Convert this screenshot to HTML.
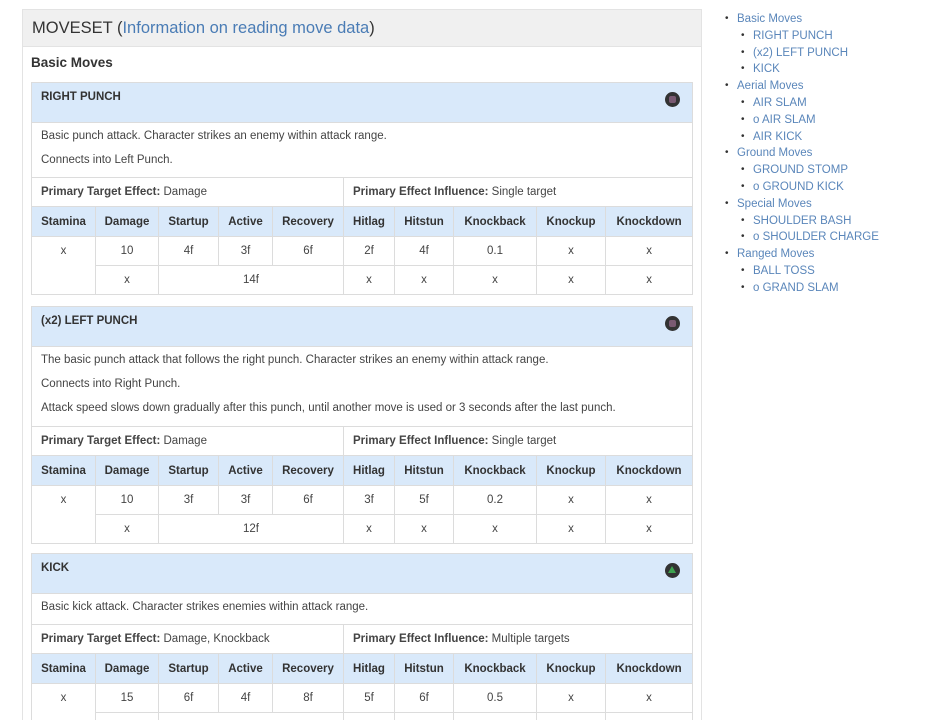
<!DOCTYPE html>
<html><head><meta charset="utf-8"><style>
*{margin:0;padding:0;box-sizing:border-box}
html,body{width:931px;height:720px;overflow:hidden}
body{background:#fff;font-family:"Liberation Sans",Arial,sans-serif;color:#333;position:relative}
.wrap{position:absolute;left:22px;top:9px;width:680px;height:720px;border:1px solid #e3e3e3;border-bottom:none}
.top{height:37px;background:#f0f0f0;border-bottom:1px solid #e3e3e3;font-size:16.5px;padding:9px 0 0 9px;color:#333}
.top a{color:#4a7cb5;text-decoration:none}
h3{position:absolute;left:31px;top:55px;font-size:13.5px;font-weight:bold}
table{position:absolute;left:31px;width:661px;border-collapse:collapse;table-layout:fixed;font-size:11.5px;color:#444}
td,th{border:1px solid #dcdcdc;text-align:center;padding:0}
th{background:#d9e9fa;font-weight:bold;height:30px;color:#333}
.hd td{background:#d9e9fa;text-align:left;font-weight:bold;height:40px;vertical-align:top;padding:8px 9px 0;position:relative;font-size:11.5px;color:#333}
.ic{position:absolute;right:12px;top:9px;width:15px;height:15px;border-radius:50%;background:#333}
.ic.p::after{content:"";position:absolute;left:4px;top:4px;width:7px;height:7px;border-radius:2px;background:#7a5a72}
.ic.g::after{content:"";position:absolute;left:3px;top:3px;width:0;height:0;border-left:4.5px solid transparent;border-right:4.5px solid transparent;border-bottom:7px solid #3fa34f}
.ds td{text-align:left;padding:6px 9px 0;vertical-align:top}
.ds p{height:24px;line-height:14px}
.ef td{text-align:left;height:29px;padding-left:9px}
.d td{height:29px}
.side{position:absolute;left:720px;top:11px;font-size:11.5px;line-height:16.8px;color:#5a86ba}
.side ul{list-style:none}
.side li::before{content:"•";color:#333;position:absolute;margin-left:-12px;font-size:10px}
.side>ul>li{padding-left:17px}
.side ul ul li{padding-left:16px}
</style></head><body>
<div class="wrap"><div class="top">MOVESET (<a>Information on reading move data</a>)</div></div>
<h3>Basic Moves</h3>

<table style="top:82px">
<colgroup><col style="width:64px"><col style="width:63px"><col style="width:60px"><col style="width:54px"><col style="width:71px"><col style="width:51px"><col style="width:59px"><col style="width:83px"><col style="width:69px"><col style="width:87px"></colgroup>
<tr class="hd"><td colspan="10">RIGHT PUNCH<span class="ic p"></span></td></tr>
<tr class="ds"><td colspan="10" style="height:55px"><p>Basic punch attack. Character strikes an enemy within attack range.</p><p>Connects into Left Punch.</p></td></tr>
<tr class="ef"><td colspan="5"><b>Primary Target Effect:</b> Damage</td><td colspan="5"><b>Primary Effect Influence:</b> Single target</td></tr>
<tr><th>Stamina</th><th>Damage</th><th>Startup</th><th>Active</th><th>Recovery</th><th>Hitlag</th><th>Hitstun</th><th>Knockback</th><th>Knockup</th><th>Knockdown</th></tr>
<tr class="d"><td rowspan="2" style="vertical-align:top;padding-top:8px">x</td><td>10</td><td>4f</td><td>3f</td><td>6f</td><td>2f</td><td>4f</td><td>0.1</td><td>x</td><td>x</td></tr>
<tr class="d"><td>x</td><td colspan="3">14f</td><td>x</td><td>x</td><td>x</td><td>x</td><td>x</td></tr>
</table>

<table style="top:306px">
<colgroup><col style="width:64px"><col style="width:63px"><col style="width:60px"><col style="width:54px"><col style="width:71px"><col style="width:51px"><col style="width:59px"><col style="width:83px"><col style="width:69px"><col style="width:87px"></colgroup>
<tr class="hd"><td colspan="10">(x2) LEFT PUNCH<span class="ic p"></span></td></tr>
<tr class="ds"><td colspan="10" style="height:80px"><p>The basic punch attack that follows the right punch. Character strikes an enemy within attack range.</p><p>Connects into Right Punch.</p><p>Attack speed slows down gradually after this punch, until another move is used or 3 seconds after the last punch.</p></td></tr>
<tr class="ef"><td colspan="5"><b>Primary Target Effect:</b> Damage</td><td colspan="5"><b>Primary Effect Influence:</b> Single target</td></tr>
<tr><th>Stamina</th><th>Damage</th><th>Startup</th><th>Active</th><th>Recovery</th><th>Hitlag</th><th>Hitstun</th><th>Knockback</th><th>Knockup</th><th>Knockdown</th></tr>
<tr class="d"><td rowspan="2" style="vertical-align:top;padding-top:8px">x</td><td>10</td><td>3f</td><td>3f</td><td>6f</td><td>3f</td><td>5f</td><td>0.2</td><td>x</td><td>x</td></tr>
<tr class="d"><td>x</td><td colspan="3">12f</td><td>x</td><td>x</td><td>x</td><td>x</td><td>x</td></tr>
</table>

<table style="top:553px">
<colgroup><col style="width:64px"><col style="width:63px"><col style="width:60px"><col style="width:54px"><col style="width:71px"><col style="width:51px"><col style="width:59px"><col style="width:83px"><col style="width:69px"><col style="width:87px"></colgroup>
<tr class="hd"><td colspan="10">KICK<span class="ic g"></span></td></tr>
<tr class="ds"><td colspan="10" style="height:30px"><p>Basic kick attack. Character strikes enemies within attack range.</p></td></tr>
<tr class="ef"><td colspan="5"><b>Primary Target Effect:</b> Damage, Knockback</td><td colspan="5"><b>Primary Effect Influence:</b> Multiple targets</td></tr>
<tr><th>Stamina</th><th>Damage</th><th>Startup</th><th>Active</th><th>Recovery</th><th>Hitlag</th><th>Hitstun</th><th>Knockback</th><th>Knockup</th><th>Knockdown</th></tr>
<tr class="d"><td rowspan="2" style="vertical-align:top;padding-top:8px">x</td><td>15</td><td>6f</td><td>4f</td><td>8f</td><td>5f</td><td>6f</td><td>0.5</td><td>x</td><td>x</td></tr>
<tr class="d"><td>x</td><td colspan="3">18f</td><td>x</td><td>x</td><td>x</td><td>x</td><td>x</td></tr>
</table>

<div class="side"><ul>
<li>Basic Moves<ul><li>RIGHT PUNCH</li><li>(x2) LEFT PUNCH</li><li>KICK</li></ul></li>
<li>Aerial Moves<ul><li>AIR SLAM</li><li>o AIR SLAM</li><li>AIR KICK</li></ul></li>
<li>Ground Moves<ul><li>GROUND STOMP</li><li>o GROUND KICK</li></ul></li>
<li>Special Moves<ul><li>SHOULDER BASH</li><li>o SHOULDER CHARGE</li></ul></li>
<li>Ranged Moves<ul><li>BALL TOSS</li><li>o GRAND SLAM</li></ul></li>
</ul></div>
</body></html>
